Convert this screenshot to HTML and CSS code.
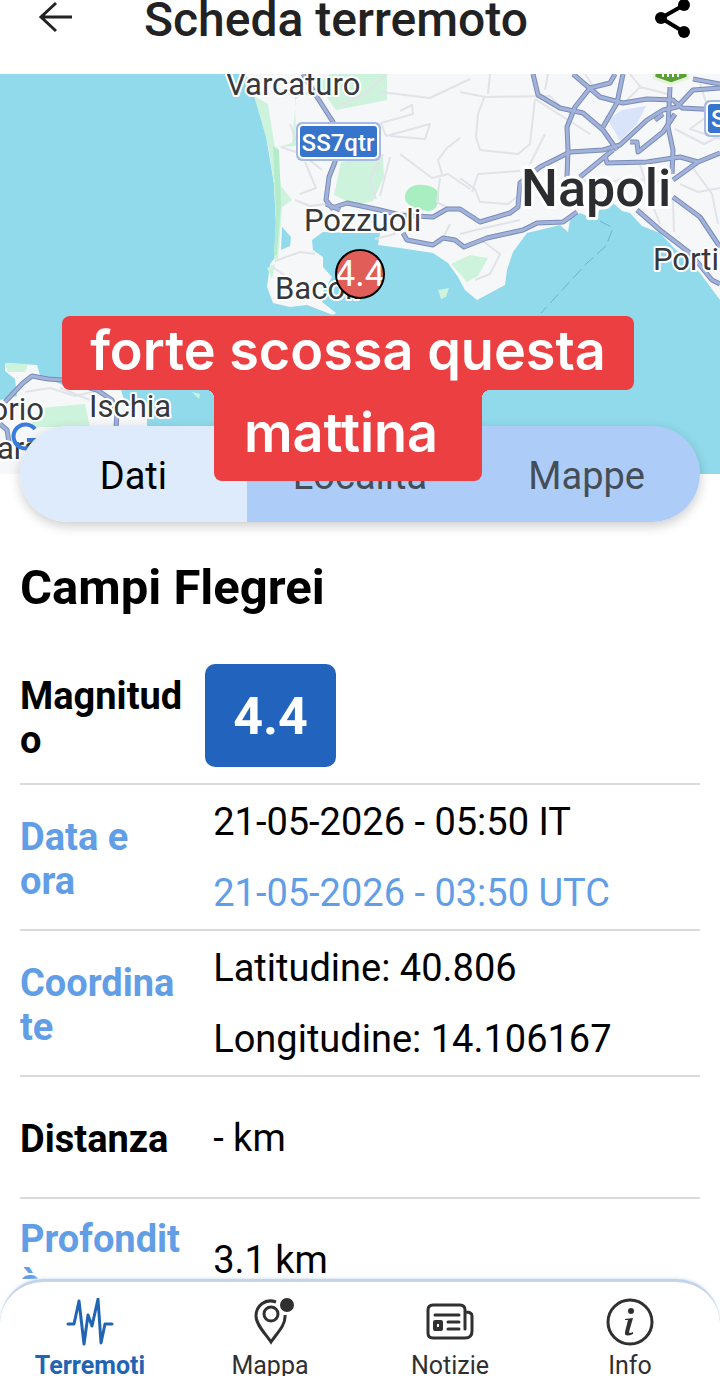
FILE: index.html
```html
<!DOCTYPE html>
<html lang="it">
<head>
    <meta charset="UTF-8">
    <meta name="viewport" content="width=device-width, initial-scale=1.0">
    <title>Scheda terremoto</title>
    <link rel="stylesheet" href="styles.css">
</head>
<body>

<header class="topbar">
    <button class="icon-button" type="button" aria-label="Indietro">
        <svg width="40" height="40" viewBox="0 0 40 40" fill="none" stroke="#222" stroke-width="3">
            <path d="M36 17H6M20 3L5 17L20 31"/>
        </svg>
    </button>
    <h1 class="title">Scheda terremoto</h1>
    <button class="icon-button" type="button" aria-label="Condividi">
        <svg width="40" height="40" viewBox="0 0 40 40">
            <path d="M32 5L9 18L32 32" fill="none" stroke="#000" stroke-width="4"/>
            <circle cx="32" cy="5" r="6"/>
            <circle cx="9" cy="18" r="6"/>
            <circle cx="32" cy="32" r="6"/>
        </svg>
    </button>
</header>

<main class="content">

    <section class="map">
        <svg class="map-canvas" viewBox="0 0 720 400" preserveAspectRatio="xMidYMid slice">
            <defs>
                <clipPath id="pin-clip"><circle cx="360" cy="200" r="24"/></clipPath>
                <g id="roads">
                    <path d="M303 0L317 23L333 48L339 66L335 88L329 103L326 126L332 134L347 129L380 136L400 141L433 143L447 135L460 135L480 148L510 139L518 133L520 109L540 93L570 78L603 76L620 71L647 46L663 36L677 33L693 16L720 14"/>
                    <path d="M326 130L340 136M403 159L407 166L433 171L443 164L455 166L464 173L487 164L523 156L537 149L563 148L577 138"/>
                    <path d="M533 0L538 21L560 34L583 39L603 56L617 76"/>
                    <path d="M573 0L600 23L623 29L647 25L673 26L682 34L720 36"/>
                    <path d="M615 0L610 9L590 14L575 33L567 53L568 76L567 103"/>
                    <path d="M623 0L617 29L603 53"/>
                    <path d="M605 81L607 89L647 88L680 83L698 88L720 79M698 88L673 106M613 76L580 103"/>
                    <path d="M673 123L700 143L710 158L720 173M637 136L660 156L690 179L703 195L712 206L720 210"/>
                    <path d="M630 68L637 68L638 78L663 58L675 40M693 5L720 10M655 46L663 40"/>
                    <path class="road-wide" d="M670 13L668 53L673 76L672 100"/>
                </g>
                <g id="island-roads">
                    <path d="M5 328L23 309L32 302L48 305L63 306L97 316L112 326L117 340L116 353M0 350L7 356L9 368"/>
                </g>
            </defs>

            <rect width="720" height="400" fill="#90daeb"/>

            <!-- terraferma -->
            <path fill="#f6f7f8" d="M246 0L256 25L264 50L269 80L274 110L276 150L274 185L270 190L267 213L273 229L290 233L307 231L333 241L336 239L322 228L322 220L332 203L323 193L323 183L313 176L312 166L323 158L350 159L380 159L378 171L400 174L433 179L448 189L458 203L465 216L477 226L505 211L507 196L513 178L527 159L560 151L568 158L570 146L580 139L596 146L599 136L613 129L622 137L630 139L642 152L660 159L673 173L700 199L720 226V0Z"/>
            <path fill="#f6f7f8" d="M5 289L37 291L40 301L63 311L120 312L124 326L147 329L147 353L140 400H0V326L17 322L15 305L5 297Z"/>
            <!-- verde -->
            <g fill="#cdf3dd">
                <path d="M254 22L268 30L275 74L292 69L296 25L330 0H387V26L336 36L325 20L295 22L296 72L277 73L281 112L292 126L282 133L278 185L274 185L276 150L274 110L268 70Z"/>
                <path d="M341 88L383 82L384 103L373 127L355 131L334 121Z"/>
                <path d="M267 194L275 190L272 205Z"/>
                <path d="M451 190L470 181L488 184L478 202L467 208Z"/>
                <path d="M40 334L85 330L90 353H30Z"/>
                <path d="M5 289L28 290L25 298L8 298Z"/>
                <path d="M192 318L200 320L199 325Z"/>
                <path d="M438 216L449 214L446 223L441 225Z"/>
            </g>
            <path fill="#a8eec0" d="M405 122C406 114 414 110 422 111C432 111 440 116 439 124C438 132 434 138 427 137C417 135 404 132 405 122Z"/>
            <path fill="#b4eccb" d="M273 72L279 76L281 130L277 180L274 183L276 140Z"/>
            <path fill="#d9e4fa" d="M608 46L622 36L646 32L637 50L620 67Z"/>
            <path fill="#90daeb" d="M282 153L291 163L290 172L281 176Z"/>

            <!-- strade minori -->
            <g fill="none" stroke="#e1e3e9" stroke-width="2" stroke-linejoin="round">
                <path d="M387 0L365 20L340 31M380 18L430 24L470 5M400 37L412 31L413 40L381 49L386 62L430 50L425 65L390 62"/>
                <path d="M290 50L296 66M281 73L302 80L322 96M383 80L370 105L376 125M390 83L380 122M400 80L432 104L448 100L470 115M442 100L438 86L447 74L460 64M440 104L437 128L448 134"/>
                <path d="M460 18L485 23L550 22L562 34M484 24L478 40L476 63L480 76L518 80L530 70L535 25M490 0L488 20M535 25L590 60M548 0L545 16M585 0L600 22"/>
                <path d="M460 104L475 115L480 128L508 130L518 122M472 118L478 100L520 97M530 90L545 60M624 29L640 13L668 20M630 0L642 15M700 10L710 40L690 55L720 65M675 55L704 70L720 62"/>
                <path d="M460 160L480 155L520 146M480 165L500 180L490 200L475 206M680 110L698 118L720 114M690 90L712 120L718 150M673 125L674 158M580 105L600 112L625 104L668 108M640 90L650 125L660 150"/>
                <path d="M275 187L300 178L315 180M271 192L290 205M295 126L310 132L326 130M305 88L316 114L300 120M450 150L440 170M383 140L395 160L375 165"/>
                <path d="M25 318L50 314L75 322L110 314M60 314L90 326"/>
            </g>
            <path d="M600 147L613 154L606 172L588 188L541 239" fill="none" stroke="#68b6cf" stroke-width="1" stroke-dasharray="12 5"/>

            <!-- strade principali -->
            <use href="#roads" class="road-edge"/>
            <use href="#roads" class="road"/>
            <use href="#island-roads" class="road-edge"/>
            <use href="#island-roads" class="road"/>

            <path d="M654 -6H688V4L671 10L654 4Z" fill="#5ba033" stroke="#e6f3dc" stroke-width="3"/>
            <path d="M663 0V3M668 0V3M673 0V3M678 0V3" stroke="#fff" stroke-width="2"/>
            <rect x="296" y="48" width="85" height="39" rx="6" fill="#a6b9e3"/>
            <rect x="299" y="51" width="79" height="33" rx="4" fill="#3774cb" stroke="#fff" stroke-width="2"/>
            <text class="road-sign" x="338" y="77" text-anchor="middle">SS7qtr</text>
            <rect x="704" y="26" width="40" height="37" rx="6" fill="#a6b9e3"/>
            <rect x="707" y="29" width="40" height="31" rx="4" fill="#3774cb" stroke="#fff" stroke-width="2"/>
            <text class="road-sign" x="711" y="53">S</text>

            <g class="place">
                <text x="226" y="21">Varcaturo</text>
                <text x="304" y="157">Pozzuoli</text>
                <text x="275" y="225">Bacoli</text>
                <text x="653" y="196">Portici</text>
                <text x="89" y="343">Ischia</text>
                <text x="44" y="346" text-anchor="end">Forio</text>
                <text x="-3" y="385">ara</text>
            </g>
            <text class="city" x="521" y="132">Napoli</text>

            <path d="M35 355A12 12 0 1 0 37 366H27" fill="none" stroke="#3b7bdc" stroke-width="4"/>

            <circle cx="360" cy="200" r="24" fill="#e05d58"/>
            <text class="pin-label" x="360" y="212" text-anchor="middle" clip-path="url(#pin-clip)">4.4</text>
            <circle cx="360" cy="200" r="24" fill="none" stroke="#000" stroke-width="2"/>
        </svg>

        <p class="caption">
            <span class="caption-line">forte scossa questa</span>
            <span class="caption-line caption-last">mattina</span>
        </p>
    </section>

    <div class="tabs">
        <button class="tab active" type="button">Dati</button>
        <button class="tab" type="button">Località</button>
        <button class="tab" type="button">Mappe</button>
    </div>

    <section class="details">
        <h2 class="place-name">Campi Flegrei</h2>
        <table class="data">
            <tr>
                <th scope="row">Magnitudo</th>
                <td class="badge-cell"><span class="badge">4.4</span></td>
            </tr>
            <tr>
                <th scope="row" class="link">Data e ora</th>
                <td><div>21-05-2026 - 05:50 IT</div><div class="link">21-05-2026 - 03:50 UTC</div></td>
            </tr>
            <tr>
                <th scope="row" class="link">Coordinate</th>
                <td><div>Latitudine: 40.806</div><div>Longitudine: 14.106167</div></td>
            </tr>
            <tr>
                <th scope="row">Distanza</th>
                <td>- km</td>
            </tr>
            <tr>
                <th scope="row" class="link">Profondità</th>
                <td>3.1 km</td>
            </tr>
        </table>
    </section>

</main>

<nav class="bottom-nav">
    <a class="nav-item active" href="#terremoti">
        <svg width="48" height="48" viewBox="0 0 48 48" fill="none" stroke="currentColor" stroke-width="3" stroke-linejoin="round" stroke-linecap="round">
            <path d="M2 26H8L13 3L18 46L22 17L26 28L32 1L35 45L39 26H46"/>
        </svg>
        <span>Terremoti</span>
    </a>
    <a class="nav-item" href="#mappa">
        <svg width="48" height="48" viewBox="0 0 48 48" fill="none" stroke="currentColor" stroke-width="3">
            <path d="M30 4C19 0 10 8 10 18C10 27 19 35 25 44C31 35 40 27 39 17"/>
            <circle cx="25" cy="16" r="7"/>
            <circle cx="41" cy="7" r="7" fill="currentColor" stroke="none"/>
        </svg>
        <span>Mappa</span>
    </a>
    <a class="nav-item" href="#notizie">
        <svg width="48" height="48" viewBox="0 0 48 48" fill="none" stroke="currentColor" stroke-width="3" stroke-linecap="round">
            <path d="M39 31V12Q39 7 34 7H7Q2 7 2 12V35Q2 40 7 40H39Q46 40 46 33V18Q46 14 40 14"/>
            <path d="M9 17H33M22 24H33M22 31H33"/>
            <path d="M9 24H15V31H9Z" stroke-width="4" stroke-linejoin="round"/>
        </svg>
        <span>Notizie</span>
    </a>
    <a class="nav-item" href="#info">
        <svg width="48" height="48" viewBox="0 0 48 48" fill="none" stroke="currentColor" stroke-width="3">
            <circle cx="24" cy="24" r="22"/>
            <circle cx="25" cy="13" r="3" fill="currentColor" stroke="none"/>
            <path d="M19 21L27 20L23 34Q23 36 27 34V36Q18 40 19 34L22 22H19Z" fill="currentColor" stroke="none"/>
        </svg>
        <span>Info</span>
    </a>
</nav>

</body>
</html>
```
FILE: styles.css
```css
* {
    box-sizing: border-box;
}
body {
    margin: 0;
    height: 100vh;
    display: flex;
    flex-direction: column;
    overflow: hidden;
    background-color: #fff;
    color: #000;
    font-family: Roboto, Arial, sans-serif;
    font-size: 38px;
}
button {
    padding: 0;
    border: none;
    background: none;
    font: inherit;
    cursor: pointer;
}

/* barra in alto */
.topbar {
    flex: none;
    display: flex;
    align-items: center;
    padding: 0 28px 34px 36px;
}
.icon-button {
    height: 40px;
    width: 40px;
}
.icon-button svg {
    display: block;
}
.title {
    flex: 1;
    margin: 0 0 0 68px;
    font-size: 48px;
    font-weight: 500;
    line-height: 40px;
    color: #222;
}

.content {
    flex: 1;
    min-height: 0;
    overflow-y: auto;
    scrollbar-width: none;
}

/* mappa */
.map {
    position: relative;
}
.map-canvas {
    display: block;
    width: 100%;
    height: 400px;
}
.road, .road-edge {
    fill: none;
    stroke-linejoin: round;
}
.road {
    stroke: #a3b2d9;
    stroke-width: 3;
}
.road-edge {
    stroke: #788bba;
    stroke-width: 5;
}
.place {
    font-size: 31px;
    fill: #36383c;
    stroke: #fff;
    stroke-width: 4px;
    stroke-linejoin: round;
    paint-order: stroke;
}
.city {
    font-size: 52px;
    font-weight: 500;
    fill: #2b2d31;
    stroke: #fff;
    stroke-width: 6px;
    stroke-linejoin: round;
    paint-order: stroke;
}
.road-sign {
    font-size: 24px;
    font-weight: 500;
    fill: #fff;
}
.pin-label {
    font-size: 36px;
    fill: #fff;
}
.caption {
    position: absolute;
    z-index: 2;
    top: 242px;
    left: 0;
    right: 24px;
    margin: 0;
    display: flex;
    flex-direction: column;
    align-items: center;
    color: #fff;
    font-family: Inter, sans-serif;
    font-size: 54px;
    font-weight: 600;
}
.caption-line {
    padding: 0 28px 4px;
    border-radius: 8px;
    background-color: #ec3f41;
    line-height: 70px;
}
.caption-last {
    position: relative;
    margin-top: -8px;
    padding: 16px 44px 13px 30px;
    border-radius: 0 0 8px 8px;
}
/* angoli concavi sotto la prima riga */
.caption-last::before, .caption-last::after {
    content: "";
    position: absolute;
    top: 8px;
    width: 8px;
    height: 8px;
}
.caption-last::before {
    right: 100%;
    background: radial-gradient(circle at 0 100%, transparent 8px, #ec3f41 8px);
}
.caption-last::after {
    left: 100%;
    background: radial-gradient(circle at 100% 100%, transparent 8px, #ec3f41 8px);
}

.tabs {
    position: relative;
    z-index: 1;
    display: flex;
    margin: -48px 20px 0;
    border-radius: 48px;
    overflow: hidden;
    box-shadow: 0 4px 12px rgba(0, 0, 0, 0.2);
}
.tab {
    flex: 1;
    padding: 4px 0 0;
    background-color: #adcdf8;
    color: #454d56;
    line-height: 92px;
}
.tab.active {
    background-color: #deebfc;
    color: #000;
}

/* dati */
.details {
    padding: 38px 20px 0;
}
.place-name {
    margin: 0 0 32px;
    font-size: 49px;
    line-height: 56px;
}
.data {
    width: 100%;
    table-layout: fixed;
    border-collapse: separate;
    border-spacing: 0;
}
.data th, .data td {
    height: 122px;
    padding: 0;
    border-bottom: 2px solid #dadada;
    text-align: left;
    vertical-align: middle;
}
.data th {
    width: 24%;
    padding-top: 4px;
    line-height: 44px;
    overflow-wrap: anywhere;
}
.data td {
    padding: 2px 0 0 30px;
    line-height: 71px;
}
.data .badge-cell {
    padding: 16px 0 16px 22px;
}
.badge {
    display: block;
    width: fit-content;
    padding: 2px 28px 0;
    border-radius: 10px;
    background-color: #2264bd;
    color: #fff;
    font-size: 52px;
    font-weight: bold;
    line-height: 101px;
}
.link {
    color: #629ee6;
}

/* menu in basso */
.bottom-nav {
    flex: none;
    display: flex;
    height: 97px;
    padding-top: 16px;
    border-top: 3px solid #c5d3eb;
    border-radius: 44px 44px 0 0;
    background-color: #fff;
    box-shadow: 0 -1px 3px #d9e8f7;
}
.nav-item {
    flex: 1;
    display: flex;
    flex-direction: column;
    align-items: center;
    gap: 6px;
    color: #303030;
    font-size: 25px;
    line-height: 28px;
    text-decoration: none;
}
.nav-item svg {
    flex: none;
}
.nav-item.active {
    color: #2264b4;
    font-weight: bold;
}
```
